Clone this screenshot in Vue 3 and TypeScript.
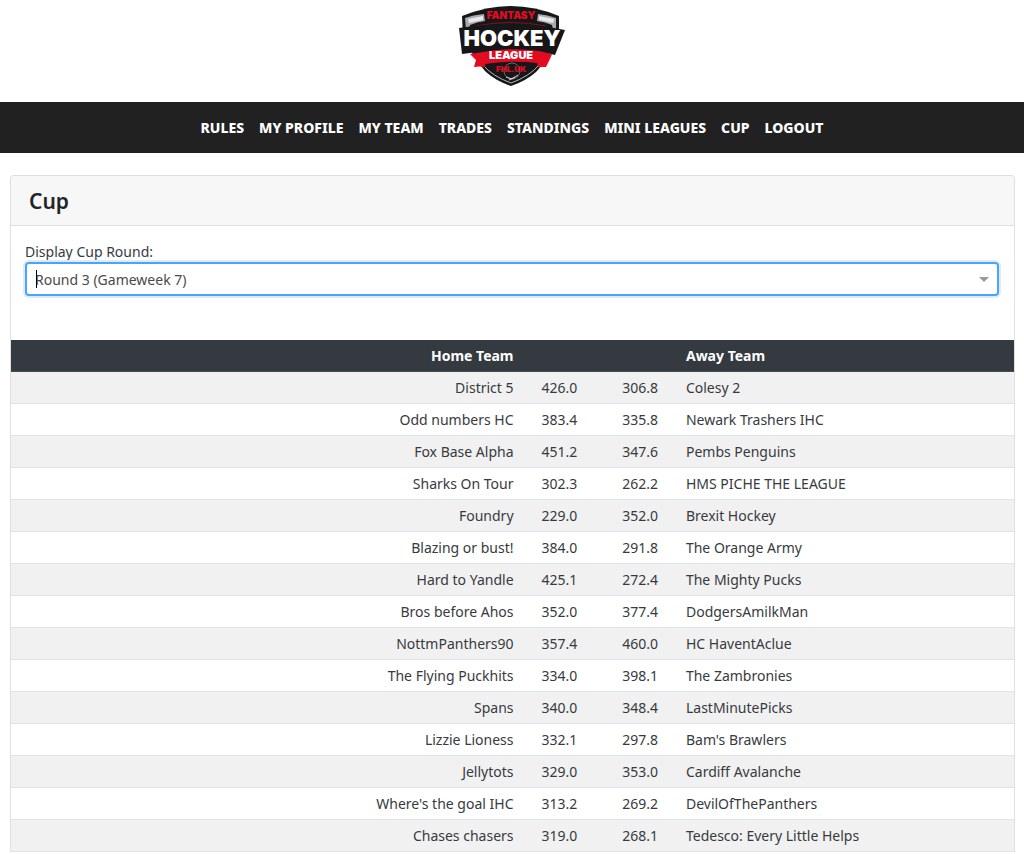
<script setup lang="ts">
import { ref } from 'vue'

interface Tie {
  home: string
  homeScore: string
  awayScore: string
  away: string
}

const links: string[] = ['Rules', 'My Profile', 'My Team', 'Trades', 'Standings', 'Mini Leagues', 'Cup', 'Logout']

const rounds: string[] = ['Round 3 (Gameweek 7)']
const round = ref(rounds[0])

const ties: Tie[] = [
  { home: 'District 5', homeScore: '426.0', awayScore: '306.8', away: 'Colesy 2' },
  { home: 'Odd numbers HC', homeScore: '383.4', awayScore: '335.8', away: 'Newark Trashers IHC' },
  { home: 'Fox Base Alpha', homeScore: '451.2', awayScore: '347.6', away: 'Pembs Penguins' },
  { home: 'Sharks On Tour', homeScore: '302.3', awayScore: '262.2', away: 'HMS PICHE THE LEAGUE' },
  { home: 'Foundry', homeScore: '229.0', awayScore: '352.0', away: 'Brexit Hockey' },
  { home: 'Blazing or bust!', homeScore: '384.0', awayScore: '291.8', away: 'The Orange Army' },
  { home: 'Hard to Yandle', homeScore: '425.1', awayScore: '272.4', away: 'The Mighty Pucks' },
  { home: 'Bros before Ahos', homeScore: '352.0', awayScore: '377.4', away: 'DodgersAmilkMan' },
  { home: 'NottmPanthers90', homeScore: '357.4', awayScore: '460.0', away: 'HC HaventAclue' },
  { home: 'The Flying Puckhits', homeScore: '334.0', awayScore: '398.1', away: 'The Zambronies' },
  { home: 'Spans', homeScore: '340.0', awayScore: '348.4', away: 'LastMinutePicks' },
  { home: 'Lizzie Lioness', homeScore: '332.1', awayScore: '297.8', away: "Bam's Brawlers" },
  { home: 'Jellytots', homeScore: '329.0', awayScore: '353.0', away: 'Cardiff Avalanche' },
  { home: "Where's the goal IHC", homeScore: '313.2', awayScore: '269.2', away: 'DevilOfThePanthers' },
  { home: 'Chases chasers', homeScore: '319.0', awayScore: '268.1', away: 'Tedesco: Every Little Helps' },
]
</script>

<template>
  <div class="page">
    <header class="brand">
      <a href="#" aria-label="Fantasy Hockey League">
        <svg class="logo" viewBox="0 0 108 80" width="108" height="80">
          <path d="M4 10Q29 0 53 0Q77 0 101 10V32L90 50Q82 62 78 66Q68 75 53 80Q38 75 28 66Q24 62 16 50L5 32Z" fill="#17171a" />
          <path d="M7 12Q15 9 26 8L27 15Q19 16 12 19L11 24H8Z" fill="#a9abaf" />
          <path d="M98 12Q90 9 80 8L79 15Q87 16 94 19L95 24H98Z" fill="#a9abaf" />
          <path d="M10 13L25 10V14L11 17ZM96 13L81 10V14L95 17Z" fill="#e9e9e9" />
          <path d="M25 59Q34 70 53 77Q72 70 81 59" fill="none" stroke="#b4b6ba" stroke-width="1" />
          <path d="M18 20Q53 13 88 20" fill="none" stroke="#7c1420" stroke-width="1" />
          <path d="M1 22Q27 18 53 18Q80 18 107 24L97 49L85 46H20L4 48Z" fill="#17171a" />
          <path d="M12 48L25 46Q53 41 81 45L94 48L92 53L88 61Q83 61 80 61L79 57Q53 54 27 58V61Q22 60 16 61L18 54Z" fill="#e30b20" />
          <circle cx="54" cy="65" r="8" fill="none" stroke="#66686c" stroke-width="1" />
          <path d="M48 71L54 73L60 69M51 74L57 71" fill="none" stroke="#d8d8d8" stroke-width="1" />
          <text class="logo-top" x="53" y="13">FANTASY</text>
          <text class="logo-main" x="54" y="40">HOCKEY</text>
          <text class="logo-mid" x="53" y="53">LEAGUE</text>
          <text class="logo-low" x="53" y="66">FHL.UK</text>
        </svg>
      </a>
    </header>

    <nav class="menu" aria-label="Main">
      <a v-for="link in links" :key="link" href="#">{{ link }}</a>
    </nav>

    <main class="card">
      <h1 class="title">Cup</h1>
      <div class="filter">
        <label for="round">Display Cup Round:</label>
        <div class="picker">
          <select id="round" v-model="round">
            <option v-for="item in rounds" :key="item" :value="item">{{ item }}</option>
          </select>
          <span class="caret" />
          <svg class="arrow" viewBox="0 0 10 5" width="10" height="5"><path d="M0 0H10L5 5Z" fill="#999" /></svg>
        </div>
      </div>
      <table class="ties">
        <colgroup>
          <col class="col-home">
          <col class="col-score">
          <col class="col-score">
          <col>
        </colgroup>
        <thead>
          <tr>
            <th class="right" scope="col">Home Team</th>
            <th />
            <th />
            <th scope="col">Away Team</th>
          </tr>
        </thead>
        <tbody>
          <tr v-for="tie in ties" :key="tie.home">
            <td class="right">{{ tie.home }}</td>
            <td>{{ tie.homeScore }}</td>
            <td class="right">{{ tie.awayScore }}</td>
            <td>{{ tie.away }}</td>
          </tr>
        </tbody>
      </table>
    </main>
  </div>
</template>

<style>
body {
  margin: 0;
  background: #fff;
}
html {
  scrollbar-width: none;
}
</style>

<style scoped>
.page {
  font-family: "Noto Sans", "Open Sans", sans-serif;
  font-size: 14px;
  line-height: 21px;
  color: #373a3e;
}
.brand {
  display: flex;
  justify-content: center;
  padding: 6px 0 16px;
}
.brand a,
.logo {
  display: block;
}
.logo text {
  font-family: Inter, sans-serif;
  font-weight: 900;
  text-anchor: middle;
}
.logo .logo-top {
  font-size: 10px;
  fill: #e30b20;
}
.logo .logo-main {
  font-size: 22px;
  fill: #fff;
}
.logo .logo-mid {
  font-size: 11px;
  fill: #fff;
}
.logo .logo-low {
  font-size: 8px;
  fill: #e30b20;
}
.menu {
  display: flex;
  justify-content: center;
  gap: 15px;
  padding: 15px;
  background: #212121;
}
.menu a {
  color: #fff;
  font-weight: 800;
  text-transform: uppercase;
  text-decoration: none;
}
.card {
  margin: 22px 9px 0 10px;
  border: 1px solid #dfdfdf;
  border-bottom: 0;
  border-radius: 4px 4px 0 0;
}
.title {
  margin: 0;
  padding: 11px 18px 9px;
  border-bottom: 1px solid #dfdfdf;
  background: #f7f7f7;
  border-radius: 3px 3px 0 0;
  font-size: 21px;
  font-weight: 600;
  line-height: 29px;
  color: #212529;
}
.filter {
  padding: 15px 15px 44px 14px;
}
.filter label {
  display: block;
}
.picker {
  position: relative;
}
.picker select {
  display: block;
  width: 100%;
  height: 34px;
  padding: 0 30px 0 8px;
  border: 2px solid #4ba3fb;
  border-radius: 4px;
  box-shadow: 0 0 0 2px #dcecfd;
  background: #fff;
  appearance: none;
  outline: none;
  font: inherit;
  color: #4a4a4a;
}
.caret {
  position: absolute;
  top: 8px;
  left: 11px;
  width: 1px;
  height: 18px;
  background: #000;
}
.arrow {
  position: absolute;
  top: 15px;
  right: 10px;
}
.ties {
  width: 100%;
  table-layout: fixed;
  border-collapse: collapse;
}
.col-home {
  width: 51.5%;
}
.col-score {
  width: 7.2%;
}
.ties th,
.ties td {
  padding: 5px 14px;
  height: 21px;
  text-align: left;
  white-space: nowrap;
}
.ties th {
  background: #343a40;
  color: #fff;
  font-weight: 700;
}
.ties td {
  border-bottom: 1px solid #dee2e6;
}
.ties thead tr {
  border-bottom: 1px solid #454d55;
}
.ties tbody tr:nth-child(odd) {
  background: #f1f1f1;
}
.ties .right {
  text-align: right;
}
</style>
